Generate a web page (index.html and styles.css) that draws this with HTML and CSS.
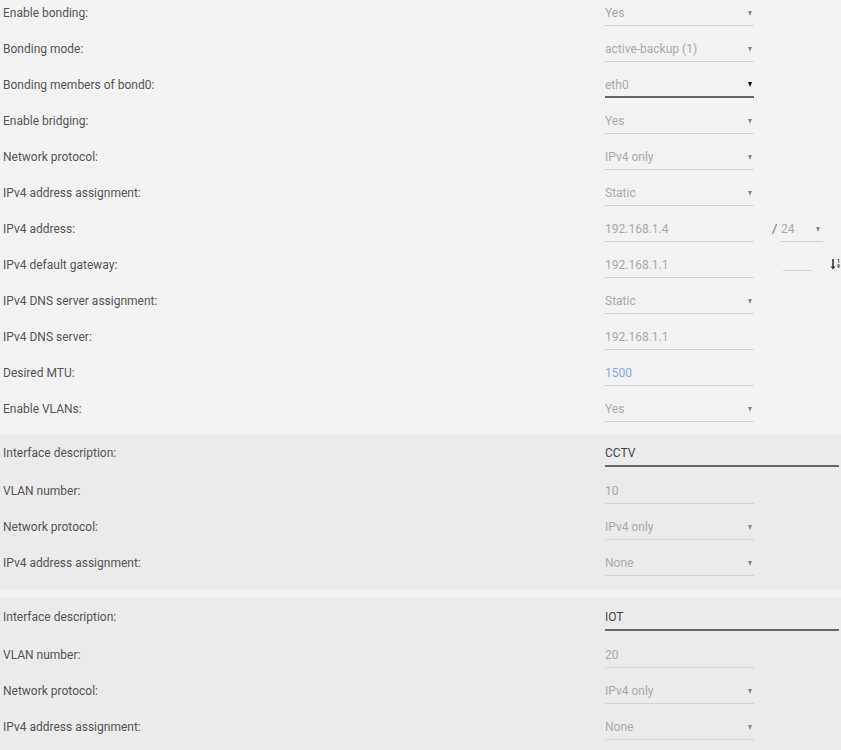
FILE: index.html
```html
<!DOCTYPE html>
<html lang="en">
<head>
<meta charset="utf-8">
<title>Interface settings</title>
<link rel="stylesheet" href="styles.css">
</head>
<body>
<div class="form">
  <div class="row"><div class="label">Enable bonding:</div><div class="field select"><span>Yes</span><i class="caret"></i></div></div>
  <div class="row"><div class="label">Bonding mode:</div><div class="field select"><span>active-backup (1)</span><i class="caret"></i></div></div>
  <div class="row"><div class="label">Bonding members of bond0:</div><div class="field select focus"><span>eth0</span><i class="caret dark"></i></div></div>
  <div class="row"><div class="label">Enable bridging:</div><div class="field select"><span>Yes</span><i class="caret"></i></div></div>
  <div class="row"><div class="label">Network protocol:</div><div class="field select"><span>IPv4 only</span><i class="caret"></i></div></div>
  <div class="row"><div class="label">IPv4 address assignment:</div><div class="field select"><span>Static</span><i class="caret"></i></div></div>
  <div class="row">
    <div class="label">IPv4 address:</div>
    <div class="field"><span>192.168.1.4</span></div>
    <span class="slash">/</span>
    <div class="field select mask"><span>24</span><i class="caret"></i></div>
  </div>
  <div class="row">
    <div class="label">IPv4 default gateway:</div>
    <div class="field"><span>192.168.1.1</span></div>
    <div class="field metric"></div>
    <span class="sort-icon">
      <svg width="6" height="12" viewBox="0 0 6 12"><path d="M3 1v9" stroke="#333" stroke-width="1.6"/><path d="M0.5 8.5L3 11.5L5.5 8.5z" fill="#333"/></svg>
      <span class="digits"><b>1</b><b>9</b></span>
    </span>
  </div>
  <div class="row"><div class="label">IPv4 DNS server assignment:</div><div class="field select"><span>Static</span><i class="caret"></i></div></div>
  <div class="row"><div class="label">IPv4 DNS server:</div><div class="field"><span>192.168.1.1</span></div></div>
  <div class="row"><div class="label">Desired MTU:</div><div class="field"><span class="hint">1500</span></div></div>
  <div class="row"><div class="label">Enable VLANs:</div><div class="field select"><span>Yes</span><i class="caret"></i></div></div>

  <div class="vlan">
    <div class="row first"><div class="label">Interface description:</div><div class="field wide"><span>CCTV</span></div></div>
    <div class="row"><div class="label">VLAN number:</div><div class="field"><span>10</span></div></div>
    <div class="row"><div class="label">Network protocol:</div><div class="field select"><span>IPv4 only</span><i class="caret"></i></div></div>
    <div class="row"><div class="label">IPv4 address assignment:</div><div class="field select"><span>None</span><i class="caret"></i></div></div>
  </div>

  <div class="vlan">
    <div class="row first"><div class="label">Interface description:</div><div class="field wide"><span>IOT</span></div></div>
    <div class="row"><div class="label">VLAN number:</div><div class="field"><span>20</span></div></div>
    <div class="row"><div class="label">Network protocol:</div><div class="field select"><span>IPv4 only</span><i class="caret"></i></div></div>
    <div class="row"><div class="label">IPv4 address assignment:</div><div class="field select"><span>None</span><i class="caret"></i></div></div>
  </div>
</div>
</body>
</html>
```
FILE: styles.css
```css
html, body {
  margin: 0;
  padding: 0;
  background: #f2f2f2;
  overflow: hidden;
}

body {
  font-family: Roboto, "Liberation Sans", sans-serif;
  font-size: 12px;
  color: #555;
}

.form {
  display: flex;
  flex-direction: column;
}

.row {
  display: flex;
  align-items: flex-start;
  height: 36px;
}

.label {
  width: 602px;
  padding-left: 3px;
  line-height: 26px;
  flex: none;
}

.field {
  flex: none;
  width: 149px;
  height: 24px;
  border-bottom: 1px solid #d4d4d4;
  display: flex;
  align-items: center;
  justify-content: space-between;
  color: #aaa;
  line-height: 24px;
  padding-top: 1px;
  box-sizing: content-box;
}

.field span {
  display: block;
}

.field.focus {
  border-bottom: 2px solid #666;
  height: 23px;
}

.field.wide {
  width: 234px;
  color: #444;
  border-bottom: 2px solid #666;
  height: 24px;
}

.hint {
  color: #8ea9dc;
}

.caret {
  display: block;
  width: 0;
  height: 0;
  margin-right: 2px;
  border-left: 2.5px solid transparent;
  border-right: 2.5px solid transparent;
  border-top: 5px solid #888;
}

.caret.dark {
  border-top-color: #111;
}

.slash {
  margin-left: 18px;
  line-height: 26px;
  font-size: 13px;
  color: #777;
  width: 10px;
}

.field.mask {
  width: 42px;
  margin-left: -1px;
}

.field.mask .caret {
  margin-right: 3px;
}

.field.metric {
  width: 29px;
  height: 16px;
  margin-left: 29px;
  margin-top: 1px;
}

.sort-icon {
  display: flex;
  align-items: center;
  gap: 1px;
  margin-left: 18px;
  margin-top: 6px;
}

.sort-icon .digits {
  display: flex;
  flex-direction: column;
  font-size: 5px;
  line-height: 5px;
  color: #333;
}

.sort-icon .digits b {
  font-weight: bold;
}

.vlan {
  background: #ebebeb;
  padding: 6px 0 4px;
  margin-top: 2px;
}

.vlan + .vlan {
  margin-top: 8px;
}

.vlan .row.first {
  height: 38px;
}
```
